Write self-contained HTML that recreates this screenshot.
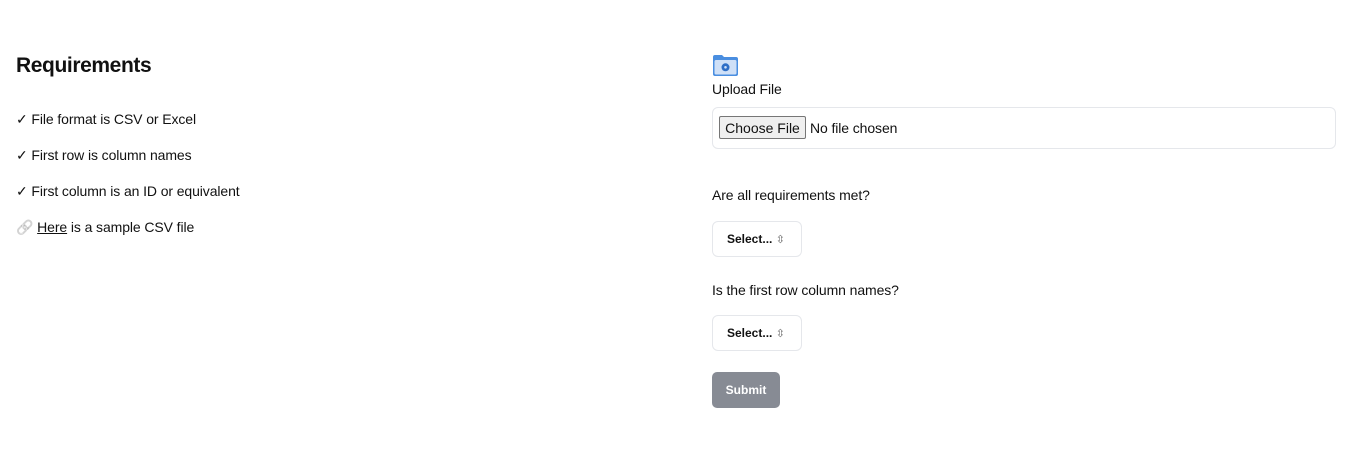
<!DOCTYPE html>
<html><head><style>
body{margin:0;width:1356px;height:462px;background:#fff;font-family:"Liberation Sans",sans-serif;color:#111;position:relative;overflow:hidden}
.a{position:absolute;white-space:nowrap}
h2{position:absolute;left:16px;top:54px;margin:0;font-size:21px;font-weight:bold;letter-spacing:-0.4px}
.t{font-size:14px;letter-spacing:-0.1px}
.box{position:absolute;border:1px solid #e5e7eb;border-radius:6px;background:#fff}
.sel{width:90px;height:36px;font-size:12px;font-weight:bold;line-height:35px;padding-left:14px;box-sizing:border-box}
</style></head><body>
<h2>Requirements</h2>
<div class="a t" style="left:16px;top:111px">✓ File format is CSV or Excel</div>
<div class="a t" style="left:16px;top:147px">✓ First row is column names</div>
<div class="a t" style="left:16px;top:183px">✓ First column is an ID or equivalent</div>
<div class="a t" style="left:16px;top:219px"><span style="filter:grayscale(1);opacity:.5">🔗</span> <u>Here</u> is a sample CSV file</div>

<svg class="a" style="left:712px;top:54px" width="27" height="23" viewBox="0 0 27 23">
<path d="M1 3 Q1 1 3 1 H10 L12 3 H24 Q26 3 26 5 V20 Q26 22 24 22 H3 Q1 22 1 20 Z" fill="#4a8ee0"/>
<rect x="2.5" y="6" width="22" height="14.5" rx="1.5" fill="#cfe0f7"/>
<circle cx="13.5" cy="13.3" r="4" fill="#2f6fc6"/><circle cx="13.5" cy="13.3" r="1.3" fill="#cfe0f7"/>
</svg>
<div class="a t" style="left:712px;top:81px">Upload File</div>
<div class="box" style="left:712px;top:107px;width:622px;height:40px"></div>
<div class="a" style="left:719px;top:116px;height:23px;border:1px solid #767676;background:#efefef;border-radius:2px;font-size:14px;line-height:22px;text-align:center;box-sizing:border-box;width:87px">Choose File</div>
<div class="a t" style="left:810px;top:120px">No file chosen</div>

<div class="a t" style="left:712px;top:187px">Are all requirements met?</div>
<div class="box sel" style="left:712px;top:221px">Select... <span style="font-weight:normal;color:#666;font-size:11px">⇳</span></div>
<div class="a t" style="left:712px;top:282px">Is the first row column names?</div>
<div class="box sel" style="left:712px;top:315px">Select... <span style="font-weight:normal;color:#666;font-size:11px">⇳</span></div>
<div class="a" style="left:712px;top:372px;width:68px;height:36px;background:#878b94;border-radius:5px;color:#fff;font-size:12px;font-weight:bold;line-height:36px;text-align:center">Submit</div>
</body></html>
